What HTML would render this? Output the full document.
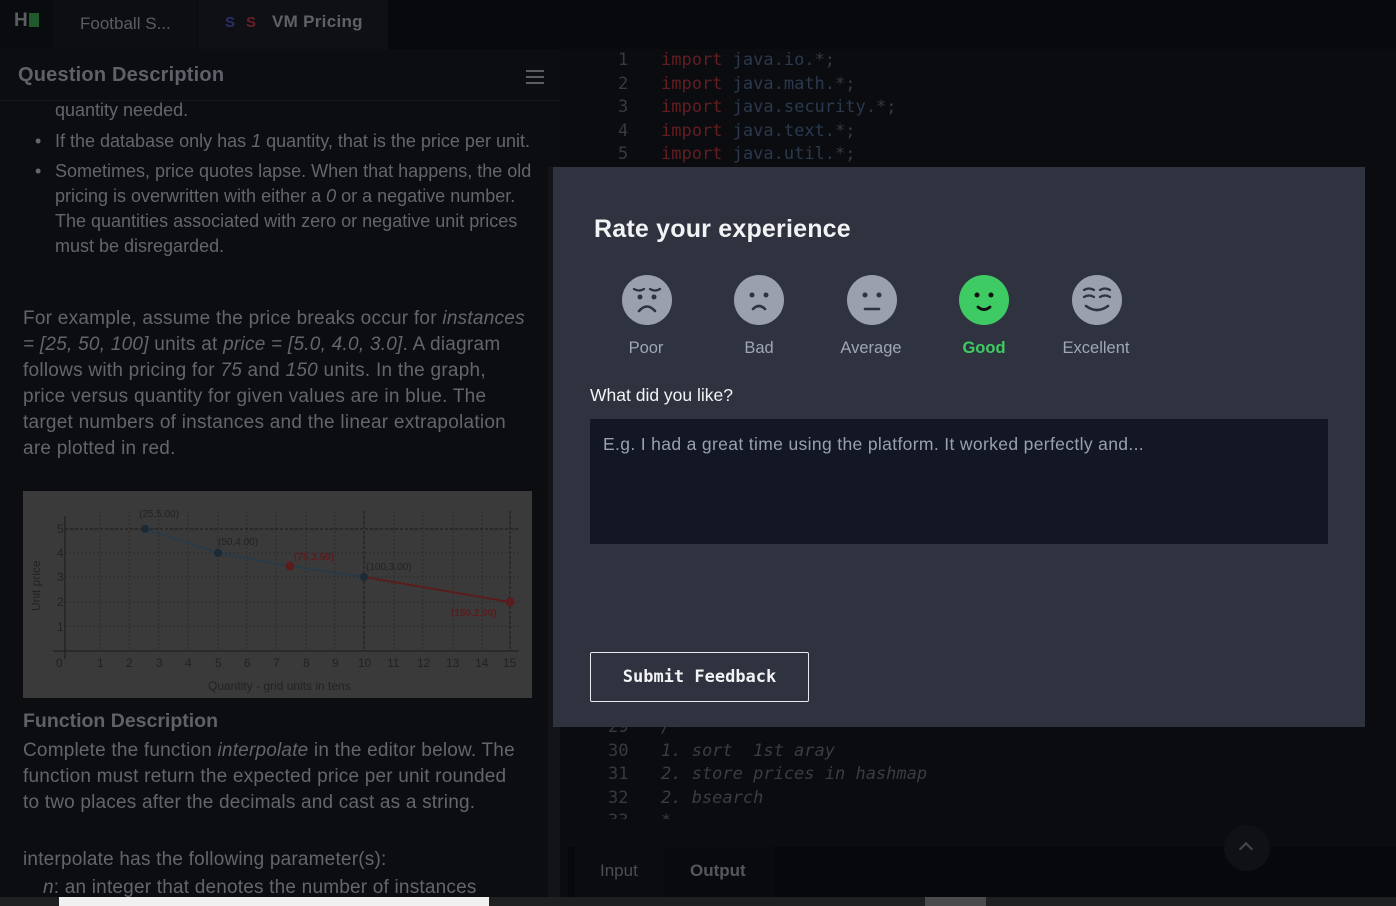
<!DOCTYPE html>
<html><head><meta charset="utf-8"><style>
*{margin:0;padding:0;box-sizing:border-box}
body{width:1396px;height:906px;overflow:hidden;background:#0b0c10;font-family:"Liberation Sans",sans-serif;position:relative;color:#62666c}
.a{position:absolute}
.t{font-size:18.5px;line-height:26px;color:#62666c;white-space:nowrap}
.mono{font-family:"DejaVu Sans Mono","Liberation Mono",monospace}
.code{font-size:17px;line-height:23.6px;white-space:pre}
.ln{color:#373a40}
.kw{color:#641d20}
.pk{color:#2a394e}
.cm{color:#393c44;font-style:italic}
.face{position:absolute;top:275px;width:50px;height:50px}
.lbl{position:absolute;top:339px;font-size:16.5px;color:#a0a6b3;text-align:center;width:110px}
</style></head><body>
<div class="a" style="left:0;top:0;width:1396px;height:49px;background:#08090c"></div>
<div class="a" style="left:0;top:0;width:52px;height:49px;background:#0a0b0e"></div>
<div class="a" style="left:14px;top:10px;font-weight:bold;font-size:19px;color:#5a5e63">H</div>
<div class="a" style="left:29px;top:13px;width:10px;height:14px;background:#1e5a2c"></div>
<div class="a" style="left:53px;top:0;width:144px;height:49px;background:#0d0e12"></div>
<div class="a t" style="left:80px;top:11px;font-size:17px;color:#5a5e63">Football S...</div>
<div class="a" style="left:198px;top:0;width:190px;height:49px;background:#0f1014"></div>
<div class="a" style="left:225px;top:14px;font-weight:bold;font-size:15px;color:#2a2e6a">S</div>
<div class="a" style="left:246px;top:14px;font-weight:bold;font-size:15px;color:#6a1e28">S</div>
<div class="a" style="left:272px;top:12px;font-weight:bold;font-size:17px;color:#5e6268;letter-spacing:0.3px">VM Pricing</div>

<div class="a" style="left:0;top:49px;width:560px;height:857px;background:#0c0d11"></div>
<div class="a" style="left:0;top:49px;width:560px;height:52px;border-bottom:1px solid #16181d"></div>
<div class="a" style="left:18px;top:64px;font-weight:bold;font-size:20px;color:#5e6268;letter-spacing:0.2px">Question Description</div>
<div class="a" style="left:526px;top:70px;width:18px;height:2px;background:#5a5e63;box-shadow:0 6px 0 #5a5e63,0 12px 0 #5a5e63"></div>
<div class="a" style="left:548px;top:167px;width:12px;height:739px;background:#121419"></div>

<div class="a t" style="left:55px;top:98px;font-size:18px;line-height:25px">quantity needed.</div>
<div class="a t" style="left:35px;top:129px;font-size:18px;line-height:25px">•</div>
<div class="a t" style="left:55px;top:129px;font-size:18px;line-height:25px">If the database only has <i>1</i> quantity, that is the price per unit.</div>
<div class="a t" style="left:35px;top:159px;font-size:18px;line-height:25px">•</div>
<div class="a t" style="left:55px;top:159px;font-size:18px;line-height:25px">Sometimes, price quotes lapse. When that happens, the old<br>pricing is overwritten with either a <i>0</i> or a negative number.<br>The quantities associated with zero or negative unit prices<br>must be disregarded.</div>

<div class="a t" style="left:23px;top:306px;font-size:19px;letter-spacing:0.25px">For example, assume the price breaks occur for <i>instances</i><br><i>= [25, 50, 100]</i> units at <i>price = [5.0, 4.0, 3.0]</i>. A diagram<br>follows with pricing for <i>75</i> and <i>150</i> units. In the graph,<br>price versus quantity for given values are in blue. The<br>target numbers of instances and the linear extrapolation<br>are plotted in red.</div>

<svg class="a" style="left:23px;top:491px" width="509" height="207" viewBox="0 0 509 207">
<rect width="509" height="207" fill="#3a3a3b"/>
<g stroke="#2c2c2e" stroke-dasharray="2,2" stroke-width="1">
<line x1="42" y1="38" x2="496" y2="38"/><line x1="42" y1="62" x2="496" y2="62"/><line x1="42" y1="86" x2="496" y2="86"/><line x1="42" y1="111" x2="496" y2="111"/><line x1="42" y1="135" x2="496" y2="135"/>
<line x1="77" y1="20" x2="77" y2="160"/><line x1="106" y1="20" x2="106" y2="160"/><line x1="136" y1="20" x2="136" y2="160"/><line x1="165" y1="20" x2="165" y2="160"/><line x1="195" y1="20" x2="195" y2="160"/><line x1="224" y1="20" x2="224" y2="160"/><line x1="253" y1="20" x2="253" y2="160"/><line x1="283" y1="20" x2="283" y2="160"/><line x1="312" y1="20" x2="312" y2="160"/><line x1="341" y1="20" x2="341" y2="160"/><line x1="371" y1="20" x2="371" y2="160"/><line x1="400" y1="20" x2="400" y2="160"/><line x1="430" y1="20" x2="430" y2="160"/><line x1="459" y1="20" x2="459" y2="160"/><line x1="487" y1="20" x2="487" y2="160"/>
</g>
<g stroke="#1a1a1a" stroke-dasharray="3,2"><line x1="42" y1="38" x2="496" y2="38"/><line x1="341" y1="20" x2="341" y2="160"/><line x1="487" y1="20" x2="487" y2="160"/></g>
<line x1="42" y1="25" x2="42" y2="168" stroke="#1a1a1a"/><line x1="30" y1="160" x2="496" y2="160" stroke="#1a1a1a"/>
<polyline points="122,38 195,62 267,75 341,86" fill="none" stroke="#253a4c" stroke-width="1.5"/>
<line x1="341" y1="86" x2="487" y2="111" stroke="#5a1c1c" stroke-width="2"/>
<circle cx="122" cy="38" r="4" fill="#1c2a36"/><circle cx="195" cy="62" r="4" fill="#1c2a36"/><circle cx="341" cy="86" r="4" fill="#1c2a36"/>
<circle cx="267" cy="75" r="4.5" fill="#5a1c1c"/><circle cx="487" cy="111" r="4.5" fill="#5a1c1c"/>
<g font-family="Liberation Sans" font-size="10" fill="#222">
<text x="116" y="26">(25,5.00)</text><text x="195" y="54">(50,4.00)</text><text x="343" y="79">(100,3.00)</text>
<text x="271" y="69" fill="#5a1c1c" font-weight="bold">(75,3.50)</text><text x="428" y="125" fill="#5a1c1c" font-weight="bold">(150,2.00)</text>
<text x="34" y="42" font-size="12">5</text><text x="34" y="66" font-size="12">4</text><text x="34" y="90" font-size="12">3</text><text x="34" y="115" font-size="12">2</text><text x="34" y="140" font-size="12">1</text>
<g font-size="12"><text x="33" y="176">0</text><text x="74" y="176">1</text><text x="103" y="176">2</text><text x="133" y="176">3</text><text x="162" y="176">4</text><text x="192" y="176">5</text><text x="221" y="176">6</text><text x="250" y="176">7</text><text x="280" y="176">8</text><text x="309" y="176">9</text><text x="335" y="176">10</text><text x="364" y="176">11</text><text x="394" y="176">12</text><text x="423" y="176">13</text><text x="452" y="176">14</text><text x="480" y="176">15</text></g>
<text x="185" y="199" font-size="12">Quantity - grid units in tens</text>
<text transform="translate(17,120) rotate(-90)" font-size="12">Unit price</text>
</g>
</svg>

<div class="a" style="left:23px;top:710px;font-weight:bold;font-size:19.5px;color:#5e6268">Function Description</div>
<div class="a t" style="left:23px;top:738px;font-size:19px;letter-spacing:0.2px">Complete the function <i>interpolate</i> in the editor below. The<br>function must return the expected price per unit rounded<br>to two places after the decimals and cast as a string.</div>
<div class="a t" style="left:23px;top:847px;font-size:19px;letter-spacing:0.2px">interpolate has the following parameter(s):</div>
<div class="a t" style="left:43px;top:875px;font-size:19px;letter-spacing:0.2px"><i>n</i>: an integer that denotes the number of instances</div>

<div class="a" style="left:568px;top:49px;width:828px;height:800px;background:#0b0c10"></div>
<div class="a mono code" style="left:618px;top:49px"><span class="ln">1</span>
<span class="ln">2</span>
<span class="ln">3</span>
<span class="ln">4</span>
<span class="ln">5</span></div>
<div class="a mono code" style="left:661px;top:49px"><span class="kw">import</span> <span class="pk">java.io.</span><span class="ln">*;</span>
<span class="kw">import</span> <span class="pk">java.math.</span><span class="ln">*;</span>
<span class="kw">import</span> <span class="pk">java.security.</span><span class="ln">*;</span>
<span class="kw">import</span> <span class="pk">java.text.</span><span class="ln">*;</span>
<span class="kw">import</span> <span class="pk">java.util.</span><span class="ln">*;</span></div>
<div class="a" style="left:568px;top:715px;width:828px;height:104px;overflow:hidden">
<div class="a mono code" style="left:40px;top:1px;color:#373a40">29
30
31
32
33</div>
<div class="a mono code cm" style="left:93px;top:1px">/*
1. sort  1st aray
2. store prices in hashmap
2. bsearch
*</div>
</div>
<div class="a" style="left:568px;top:847px;width:828px;height:50px;background:#07080b"></div>
<div class="a" style="left:575px;top:847px;width:90px;height:50px;background:#0b0c10"></div>
<div class="a" style="left:666px;top:847px;width:108px;height:50px;background:#090a0d"></div>
<div class="a" style="left:600px;top:861px;font-size:17px;color:#4a4e54">Input</div>
<div class="a" style="left:690px;top:861px;font-size:17px;font-weight:bold;color:#54585e">Output</div>
<div class="a" style="left:1224px;top:825px;width:46px;height:46px;border-radius:50%;background:#101116"></div>
<div class="a" style="left:1241px;top:844px;width:10px;height:10px;border-left:2px solid #44484e;border-top:2px solid #44484e;transform:rotate(45deg)"></div>

<div class="a" style="left:0;top:897px;width:1396px;height:9px;background:#1f2022"></div>
<div class="a" style="left:59px;top:897px;width:430px;height:9px;background:#f0f0f0"></div>
<div class="a" style="left:925px;top:897px;width:61px;height:9px;background:#4a4a4c"></div>

<div class="a" style="left:553px;top:167px;width:812px;height:560px;background:#2f333f"></div>
<div class="a" style="left:594px;top:215px;font-size:25px;font-weight:bold;color:#f2f3f5;letter-spacing:0.2px">Rate your experience</div>

<svg class="face" style="left:622px" viewBox="0 0 50 50"><circle cx="25" cy="25" r="25" fill="#9aa0ac"/><circle cx="18" cy="22" r="2.5" fill="#2f333f"/><circle cx="32" cy="22" r="2.5" fill="#2f333f"/><path d="M12 14 q5 3 10 0 M28 14 q5 3 10 0" stroke="#2f333f" stroke-width="2.2" fill="none" stroke-linecap="round"/><path d="M17 36 q8 -9 16 0" stroke="#2f333f" stroke-width="2.6" fill="none" stroke-linecap="round"/></svg>
<svg class="face" style="left:734px" viewBox="0 0 50 50"><circle cx="25" cy="25" r="25" fill="#9aa0ac"/><circle cx="18" cy="20" r="2.5" fill="#2f333f"/><circle cx="32" cy="20" r="2.5" fill="#2f333f"/><path d="M19 34 q6 -6 12 0" stroke="#2f333f" stroke-width="2.6" fill="none" stroke-linecap="round"/></svg>
<svg class="face" style="left:847px" viewBox="0 0 50 50"><circle cx="25" cy="25" r="25" fill="#9aa0ac"/><circle cx="18" cy="20" r="2.5" fill="#2f333f"/><circle cx="32" cy="20" r="2.5" fill="#2f333f"/><path d="M18 34 h14" stroke="#2f333f" stroke-width="2.6" stroke-linecap="round"/></svg>
<svg class="face" style="left:959px" viewBox="0 0 50 50"><circle cx="25" cy="25" r="25" fill="#3fcb64"/><circle cx="18" cy="20" r="2.5" fill="#111"/><circle cx="32" cy="20" r="2.5" fill="#111"/><path d="M19 32 q6 5 12 0" stroke="#111" stroke-width="2.8" fill="none" stroke-linecap="round"/></svg>
<svg class="face" style="left:1072px" viewBox="0 0 50 50"><circle cx="25" cy="25" r="25" fill="#9aa0ac"/><path d="M12 15 q5 -3 10 0 M28 15 q5 -3 10 0 M12 22 q5 -3 10 0 M28 22 q5 -3 10 0" stroke="#2f333f" stroke-width="2.2" fill="none" stroke-linecap="round"/><path d="M14 31 q11 8 22 0" stroke="#2f333f" stroke-width="2.6" fill="none" stroke-linecap="round"/></svg>
<div class="lbl" style="left:591px">Poor</div>
<div class="lbl" style="left:704px">Bad</div>
<div class="lbl" style="left:816px">Average</div>
<div class="lbl" style="left:929px;color:#3fcb64;font-weight:bold">Good</div>
<div class="lbl" style="left:1041px">Excellent</div>

<div class="a" style="left:590px;top:385px;font-size:17.5px;color:#f2f3f5">What did you like?</div>
<div class="a" style="left:590px;top:419px;width:738px;height:125px;background:#131725"></div>
<div class="a" style="left:603px;top:434px;font-size:17.5px;color:#9aa0ac;letter-spacing:0.35px">E.g. I had a great time using the platform. It worked perfectly and...</div>
<div class="a mono" style="left:590px;top:652px;width:219px;height:50px;border:1px solid #e8eaed;border-radius:2px;color:#f2f3f5;font-weight:bold;font-size:17px;text-align:center;line-height:48px">Submit Feedback</div>
</body></html>
